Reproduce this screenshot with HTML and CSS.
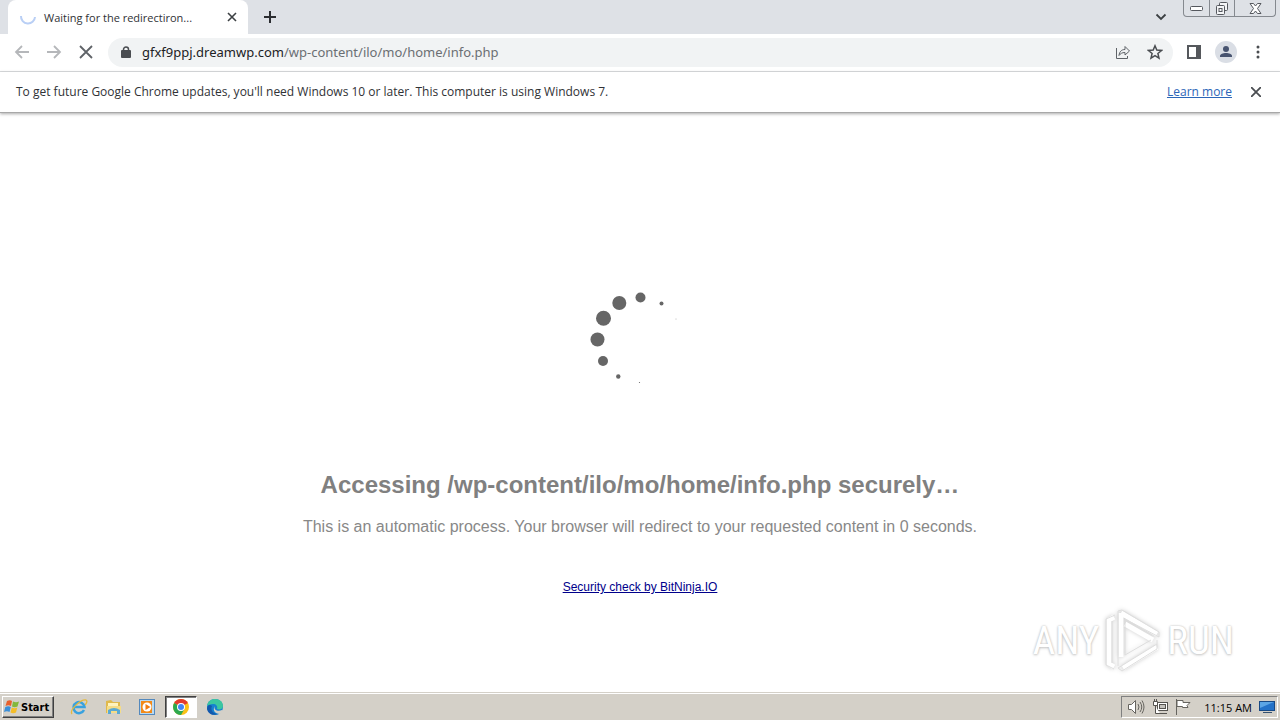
FILE: index.html
```html
<!DOCTYPE html>
<html lang="en">

<head>
    <meta charset="UTF-8">
    <meta name="viewport" content="width=device-width, initial-scale=1.0">
    <title>Waiting for the redirectiron...</title>
    <link rel="stylesheet" href="styles.css">
</head>

<body>
    <header class="tabstrip">
        <div class="tab">
            <svg class="tab-spinner" width="18" height="18" viewBox="0 0 18 18" fill="none" stroke="#b9cff5" stroke-width="2">
                <path d="M2 8a7 7 0 0 0 14 1" />
            </svg>
            <span class="tab-title">Waiting for the redirectiron...</span>
            <button class="icon-btn" aria-label="Close tab">
                <svg width="10" height="10" viewBox="0 0 10 10" stroke="#3c4043" stroke-width="1.600">
                    <path d="M1 1l8 8M9 1l-8 8" />
                </svg>
            </button>
        </div>
        <button class="icon-btn new-tab" aria-label="New tab">
            <svg width="12" height="12" viewBox="0 0 12 12" stroke="#2b2d31" stroke-width="2">
                <path d="M6 0v12M0 6h12" />
            </svg>
        </button>
        <button class="icon-btn tab-search" aria-label="Search tabs">
            <svg width="12" height="8" viewBox="0 0 12 8" fill="none" stroke="#3c4043" stroke-width="1.800">
                <path d="M1.500 1.500L6 6l4.500-4.500" />
            </svg>
        </button>
        <div class="window-buttons">
            <button aria-label="Minimize">
                <svg width="13" height="6" viewBox="0 0 13 6" fill="#fff" stroke="#55585e">
                    <rect x=".5" y="1.500" width="12" height="4" rx="1" />
                </svg>
            </button>
            <button aria-label="Restore">
                <svg width="14" height="13" viewBox="0 0 14 13" fill="#f4f5f7" stroke="#55585e">
                    <rect x="4.500" y=".5" width="8" height="8" rx="1" />
                    <rect x="1.500" y="3.500" width="8" height="9" rx="1" />
                    <rect x="4" y="6.500" width="3" height="3" />
                </svg>
            </button>
            <button class="window-close" aria-label="Close">
                <svg width="13" height="11" viewBox="0 0 13 11" fill="#fff" stroke="#55585e">
                    <path d="M1 .5h3.500l2 2.500 2-2.500H12L8.500 5.500 12 10.500H8.500l-2-2.500-2 2.500H1l3.500-5z" />
                </svg>
            </button>
        </div>
    </header>

    <nav class="toolbar">
        <button class="icon-btn nav-btn" aria-label="Back">
            <svg width="16" height="16" viewBox="0 0 16 16" fill="none" stroke="#b5b7ba" stroke-width="1.800">
                <path d="M15 8H2M8 2L2 8l6 6" />
            </svg>
        </button>
        <button class="icon-btn nav-btn" aria-label="Forward">
            <svg width="16" height="16" viewBox="0 0 16 16" fill="none" stroke="#b5b7ba" stroke-width="1.800">
                <path d="M1 8h13M8 2l6 6-6 6" />
            </svg>
        </button>
        <button class="icon-btn nav-btn" aria-label="Stop">
            <svg width="14" height="14" viewBox="0 0 14 14" stroke="#5f6368" stroke-width="1.800">
                <path d="M1 1l12 12M13 1L1 13" />
            </svg>
        </button>
        <div class="omnibox">
            <svg width="10" height="13" viewBox="0 0 10 13">
                <rect y="4" width="10" height="8" rx="1" fill="#4a4d51" />
                <path d="M2.500 5V3.500a2.500 2.500 0 0 1 5 0V5" fill="none" stroke="#4a4d51" stroke-width="1.500" />
            </svg>
            <div class="url">
                <input type="text" class="host" aria-label="Address" value="gfxf9ppj.dreamwp.com">
                <span class="path">/wp-content/ilo/mo/home/info.php</span>
            </div>
            <button class="icon-btn" aria-label="Share">
                <svg width="16" height="16" viewBox="0 0 16 16" fill="none" stroke="#5f6368">
                    <path d="M1.500 4v10.500h11V12" />
                    <path d="M4 11.500c.5-4 2.500-6 6-6v-3l4.500 4.500-4.500 4V8.500c-3 0-4.500 1-6 3z" />
                </svg>
            </button>
            <button class="icon-btn" aria-label="Bookmark">
                <svg width="16" height="16" viewBox="0 0 16 16" fill="none" stroke="#4a4d51" stroke-width="1.500">
                    <path d="M8 1.800l1.800 4.300 4.700.4-3.600 3 1.100 4.600L8 11.700l-4 2.400 1.100-4.600-3.600-3 4.700-.4z" />
                </svg>
            </button>
        </div>
        <button class="icon-btn tool-btn" aria-label="Side panel">
            <svg width="14" height="14" viewBox="0 0 14 14">
                <rect x="1" y="1" width="12" height="12" fill="#fff" stroke="#55585c" stroke-width="2" />
                <rect x="9" width="5" height="14" fill="#55585c" />
            </svg>
        </button>
        <button class="icon-btn tool-btn" aria-label="Profile">
            <svg width="22" height="22" viewBox="0 0 22 22">
                <circle cx="11" cy="11" r="11" fill="#dadee5" />
                <circle cx="11" cy="8" r="3" fill="#485470" />
                <path d="M5 16v-1c0-2 3-3 6-3s6 1 6 3v1z" fill="#485470" />
            </svg>
        </button>
        <button class="icon-btn tool-btn" aria-label="Menu">
            <svg width="4" height="14" viewBox="0 0 4 14" fill="#4a4d51">
                <circle cx="2" cy="2" r="1.500" />
                <circle cx="2" cy="7" r="1.500" />
                <circle cx="2" cy="12" r="1.500" />
            </svg>
        </button>
    </nav>

    <div class="infobar">
        <span>To get future Google Chrome updates, you'll need Windows 10 or later. This computer is using Windows 7.</span>
        <a class="learn-more" href="#">Learn more</a>
        <button class="icon-btn" aria-label="Dismiss">
            <svg width="10" height="10" viewBox="0 0 10 10" stroke="#4a4d51" stroke-width="1.800">
                <path d="M0 0l10 10M10 0L0 10" />
            </svg>
        </button>
    </div>

    <main class="page">
        <svg class="loader" width="100" height="100" viewBox="0 0 100 100" fill="#666">
            <circle cx="50.500" cy="7.500" r="5" />
            <circle cx="71.500" cy="13.500" r="2" />
            <circle cx="86" cy="29" r=".4" />
            <circle cx="49.500" cy="92.500" r=".6" />
            <circle cx="28.300" cy="86.500" r="2.200" />
            <circle cx="13" cy="71" r="5" />
            <circle cx="7.500" cy="49.500" r="7" />
            <circle cx="13.500" cy="28.300" r="7.500" />
            <circle cx="29.300" cy="13" r="7" />
        </svg>
        <h1>Accessing /wp-content/ilo/mo/home/info.php securely…</h1>
        <p>This is an automatic process. Your browser will redirect to your requested content in 0 seconds.</p>
        <a class="check-link" href="#">Security check by BitNinja.IO</a>

        <div class="watermark">
            <span>ANY</span>
            <svg width="60" height="66" viewBox="0 0 60 66" fill="none" stroke-linejoin="round">
                <path d="M11 9L6 12v44l5 3M18 5v44M18 5l36 21M22 16l28 16M20 60l34-21" stroke="#fff" stroke-width="5" />
                <path d="M12 7L3 11v46l8 4M9 13v42M15 58V3l4-1 37 22v5L22 11v36l26-15M54 32v9L19 63l-4-3 39-24" stroke="#dedede" stroke-width="1" />
            </svg>
            <span>RUN</span>
        </div>
    </main>

    <footer class="taskbar">
        <button class="start">
            <svg width="16" height="16" viewBox="0 0 16 16">
                <path d="M3 2q3-1.500 5 0L7 7Q4.500 5.500 1.500 7z" fill="#e8602c" />
                <path d="M9 2.500q3 1.500 6 0L13.500 7.500q-3 1.500-5.500 0z" fill="#83b83b" />
                <path d="M1.300 8q3-1.500 5.500 0l-1.300 5Q3 11.500 0 13z" fill="#3b8fd8" />
                <path d="M7.800 8.500q3 1.500 5.500 0L12 13.500q-3 1.500-5.500 0z" fill="#f4bd28" />
            </svg>
            Start
        </button>
        <button class="task" aria-label="Internet Explorer">
            <svg width="18" height="18" viewBox="0 0 18 18" fill="none">
                <path d="M14 12a5.500 5.500 0 1 1 .5-3H4" stroke="#39a2df" stroke-width="2.500" />
                <path d="M2 16C-1 12 11 1 16 2c2 1 0 4-1 5" stroke="#e5b93c" stroke-width="1.300" />
            </svg>
        </button>
        <button class="task" aria-label="Explorer">
            <svg width="17" height="16" viewBox="0 0 17 16">
                <path d="M1 2l5-1 2 2h7v11H1z" fill="#e0b94c" />
                <path d="M3 4h10v4H3z" fill="#fff3bd" />
                <path d="M2 7h14v7H2z" fill="#f5dc87" />
                <path d="M3 15v-4q6-4 12 0v4h-3v-3H6v3z" fill="#5aa9d3" />
            </svg>
        </button>
        <button class="task" aria-label="Media Player">
            <svg width="16" height="16" viewBox="0 0 16 16">
                <rect x=".5" y=".5" width="15" height="15" fill="#b9daf2" stroke="#5489bd" />
                <rect x="2" y="2" width="11" height="12" fill="#f28a18" />
                <circle cx="8" cy="8" r="4.500" fill="#fff" />
                <path d="M6.500 5l5 3-5 3z" fill="#f07c10" />
            </svg>
        </button>
        <button class="task active" aria-label="Chrome">
            <svg width="16" height="16" viewBox="0 0 16 16">
                <circle cx="8" cy="8" r="8" fill="#fbc116" />
                <path d="M8 8L1.100 4A8 8 0 0 1 14.900 4z" fill="#e33b2e" />
                <path d="M8 8L1.100 4A8 8 0 0 0 8 16l3.500-6z" fill="#2da94f" />
                <circle cx="8" cy="8" r="4" fill="#fff" />
                <circle cx="8" cy="8" r="3" fill="#4285f4" />
            </svg>
        </button>
        <button class="task" aria-label="Edge">
            <svg width="16" height="16" viewBox="0 0 16 16">
                <circle cx="8" cy="8" r="8" fill="#1681cf" />
                <path d="M0 7C1 2 4 0 8 0c5 0 8 3 8 7 0 3-3 4-6 3 1-3-1-5-4-5S1 6 0 7z" fill="#3bc6a0" />
                <path d="M5 7c-2 4 1 8 6 8-5 2-10 0-11-5 0-4 3-5 5-3z" fill="#1359ad" />
                <path d="M8 7c-2 4 3 6 7 4l1 1-3 3C8 15 5 11 8 7z" fill="#d4d0c8" />
            </svg>
        </button>
        <div class="tray">
            <svg width="18" height="16" viewBox="0 0 18 16" fill="#fff" stroke="#66645f">
                <path d="M1.500 5.500h3l4-4v13l-4-4h-3z" />
                <path d="M11 5q2 3 0 6M13 3q3.500 5 0 10M15 1.500q4 6.500 0 13" fill="none" />
            </svg>
            <svg width="16" height="16" viewBox="0 0 16 16" fill="#fff" stroke="#55534f">
                <rect x="5.500" y="3.500" width="10" height="8" />
                <rect x="7.500" y="5.500" width="6" height="4" fill="#c4c2bd" />
                <path d="M7 14.500h8M3.500 7v7.500H8M1.500 2.500h4v4h-4zM2.500 0v2M4.500 0v2" />
            </svg>
            <svg width="16" height="16" viewBox="0 0 16 16" fill="#fff" stroke="#66645f">
                <path d="M1.500 0v16M2 1.500h6v2h7l-3 3 1 2H7.500v-1H2z" />
            </svg>
            <time>11:15 AM</time>
            <svg width="16" height="14" viewBox="0 0 16 14">
                <rect x=".5" y="1.500" width="15" height="9" fill="#2372c8" stroke="#174985" />
                <path d="M1 2h14L1 8z" fill="#5ba5e5" />
                <path d="M4 12h9v1H4z" fill="#35506e" />
            </svg>
        </div>
    </footer>
</body>

</html>
```
FILE: styles.css
```css
* {
    box-sizing: border-box;
}

body {
    display: flex;
    flex-direction: column;
    min-height: 100vh;
    margin: 0;
    background-color: #fff;
    font-family: "Open Sans", "Noto Sans", sans-serif;
    font-size: 12px;
    color: #303236;
}

button {
    padding: 0;
    border: 0;
    background: none;
    font: inherit;
    color: inherit;
}

svg {
    display: block;
    flex: none;
}

.icon-btn {
    display: flex;
    align-items: center;
    justify-content: center;
    width: 16px;
    height: 24px;
    flex: none;
}

/* Tabs */
.tabstrip {
    display: flex;
    align-items: center;
    height: 34px;
    padding: 0 4px 0 8px;
    background-color: #dee1e6;
}

.tab {
    display: flex;
    align-items: center;
    gap: 7px;
    width: 240px;
    height: 34px;
    padding: 0 8px 0 11px;
    background-color: #fff;
    border-radius: 8px 8px 0 0;
}

.tab-title {
    flex: 1;
    font-size: 11px;
    white-space: nowrap;
}

.new-tab {
    margin-left: 14px;
}

.tab-search {
    margin-left: auto;
    margin-right: 14px;
}

.window-buttons {
    display: flex;
    align-self: flex-start;
    height: 17px;
    border: 1px solid #85898f;
    border-top: 0;
    border-radius: 0 0 4px 4px;
}

.window-buttons button {
    display: flex;
    align-items: center;
    justify-content: center;
    width: 25px;
}

.window-buttons button + button {
    border-left: 1px solid #85898f;
}

.window-buttons .window-close {
    width: 41px;
}

/* Toolbar */
.toolbar {
    display: flex;
    align-items: center;
    height: 38px;
    padding: 0 11px 1px 14px;
    border-bottom: 1px solid #d8dadd;
}

.nav-btn {
    margin-right: 16px;
}

.omnibox {
    display: flex;
    flex: 1;
    align-items: center;
    gap: 16px;
    height: 29px;
    margin-left: -2px;
    padding: 0 10px 0 13px;
    background-color: #f1f3f4;
    border-radius: 15px;
}

.url {
    display: flex;
    flex: 1;
    align-items: center;
    margin-left: -5px;
    font-family: "Noto Sans", sans-serif;
    font-size: 13px;
    line-height: 20px;
}

.host {
    field-sizing: content;
    padding: 0;
    border: 0;
    background: none;
    font: inherit;
    color: #202124;
}

.path {
    color: #6b6f73;
}

.tool-btn {
    width: 22px;
    margin-left: 10px;
}

/* Update notice */
.infobar {
    display: flex;
    align-items: center;
    height: 41px;
    padding: 0 16px 1px;
    border-bottom: 1px solid #a8a8a8;
    box-shadow: 0 1px 3px #aaa;
}

.learn-more {
    margin-left: auto;
    margin-right: 16px;
    color: #2b66b8;
}

/* Page */
.page {
    position: relative;
    display: flex;
    flex: 1;
    flex-direction: column;
    align-items: center;
    padding-top: 177px;
    font-family: "Liberation Sans", Arial, sans-serif;
}

h1 {
    margin: 80px 0 0;
    font-size: 24px;
    line-height: 30px;
    color: #808080;
}

p {
    margin: 17px 0 0;
    font-size: 16px;
    line-height: 20px;
    color: #888;
}

.check-link {
    margin-top: 42px;
    line-height: 16px;
    color: #00008b;
}

.watermark {
    position: absolute;
    right: 46px;
    bottom: 18px;
    display: flex;
    align-items: center;
    gap: 4px;
    font-family: "Roboto Condensed", Roboto, sans-serif;
    font-size: 39px;
    color: #fff;
    text-shadow: 0 0 2px #bbb, 0 1px 3px #ccc;
}

.watermark svg {
    filter: drop-shadow(0 0 2px #ccc);
}

/* Taskbar */
.taskbar {
    display: flex;
    align-items: center;
    height: 28px;
    padding: 2px 2px 1px;
    background-color: #d4d0c8;
    border-top: 1px solid #d4d0c8;
    box-shadow: inset 0 1px #fff;
}

.start {
    display: flex;
    align-items: center;
    gap: 1px;
    width: 52px;
    height: 22px;
    margin-right: 9px;
    padding-left: 1px;
    border: 1px solid;
    border-color: #fff #404040 #404040 #fff;
    box-shadow: inset -1px -1px #808080;
    font-family: "DejaVu Sans Condensed", "DejaVu Sans", sans-serif;
    font-size: 11px;
    font-weight: bold;
    color: #000;
}

.task {
    display: flex;
    align-items: center;
    justify-content: center;
    width: 32px;
    height: 22px;
    margin-right: 2px;
}

.task.active {
    background-color: #fff;
    border: 1px solid;
    border-color: #404040 #fff #fff #404040;
    box-shadow: inset 1px 1px #808080;
}

.tray {
    display: flex;
    align-items: center;
    gap: 7px;
    height: 22px;
    margin-left: auto;
    padding: 0 2px 0 5px;
    border: 1px solid;
    border-color: #808080 #fff #fff #808080;
    font-size: 11px;
    color: #000;
}

.tray time {
    margin-left: 6px;
}
```
